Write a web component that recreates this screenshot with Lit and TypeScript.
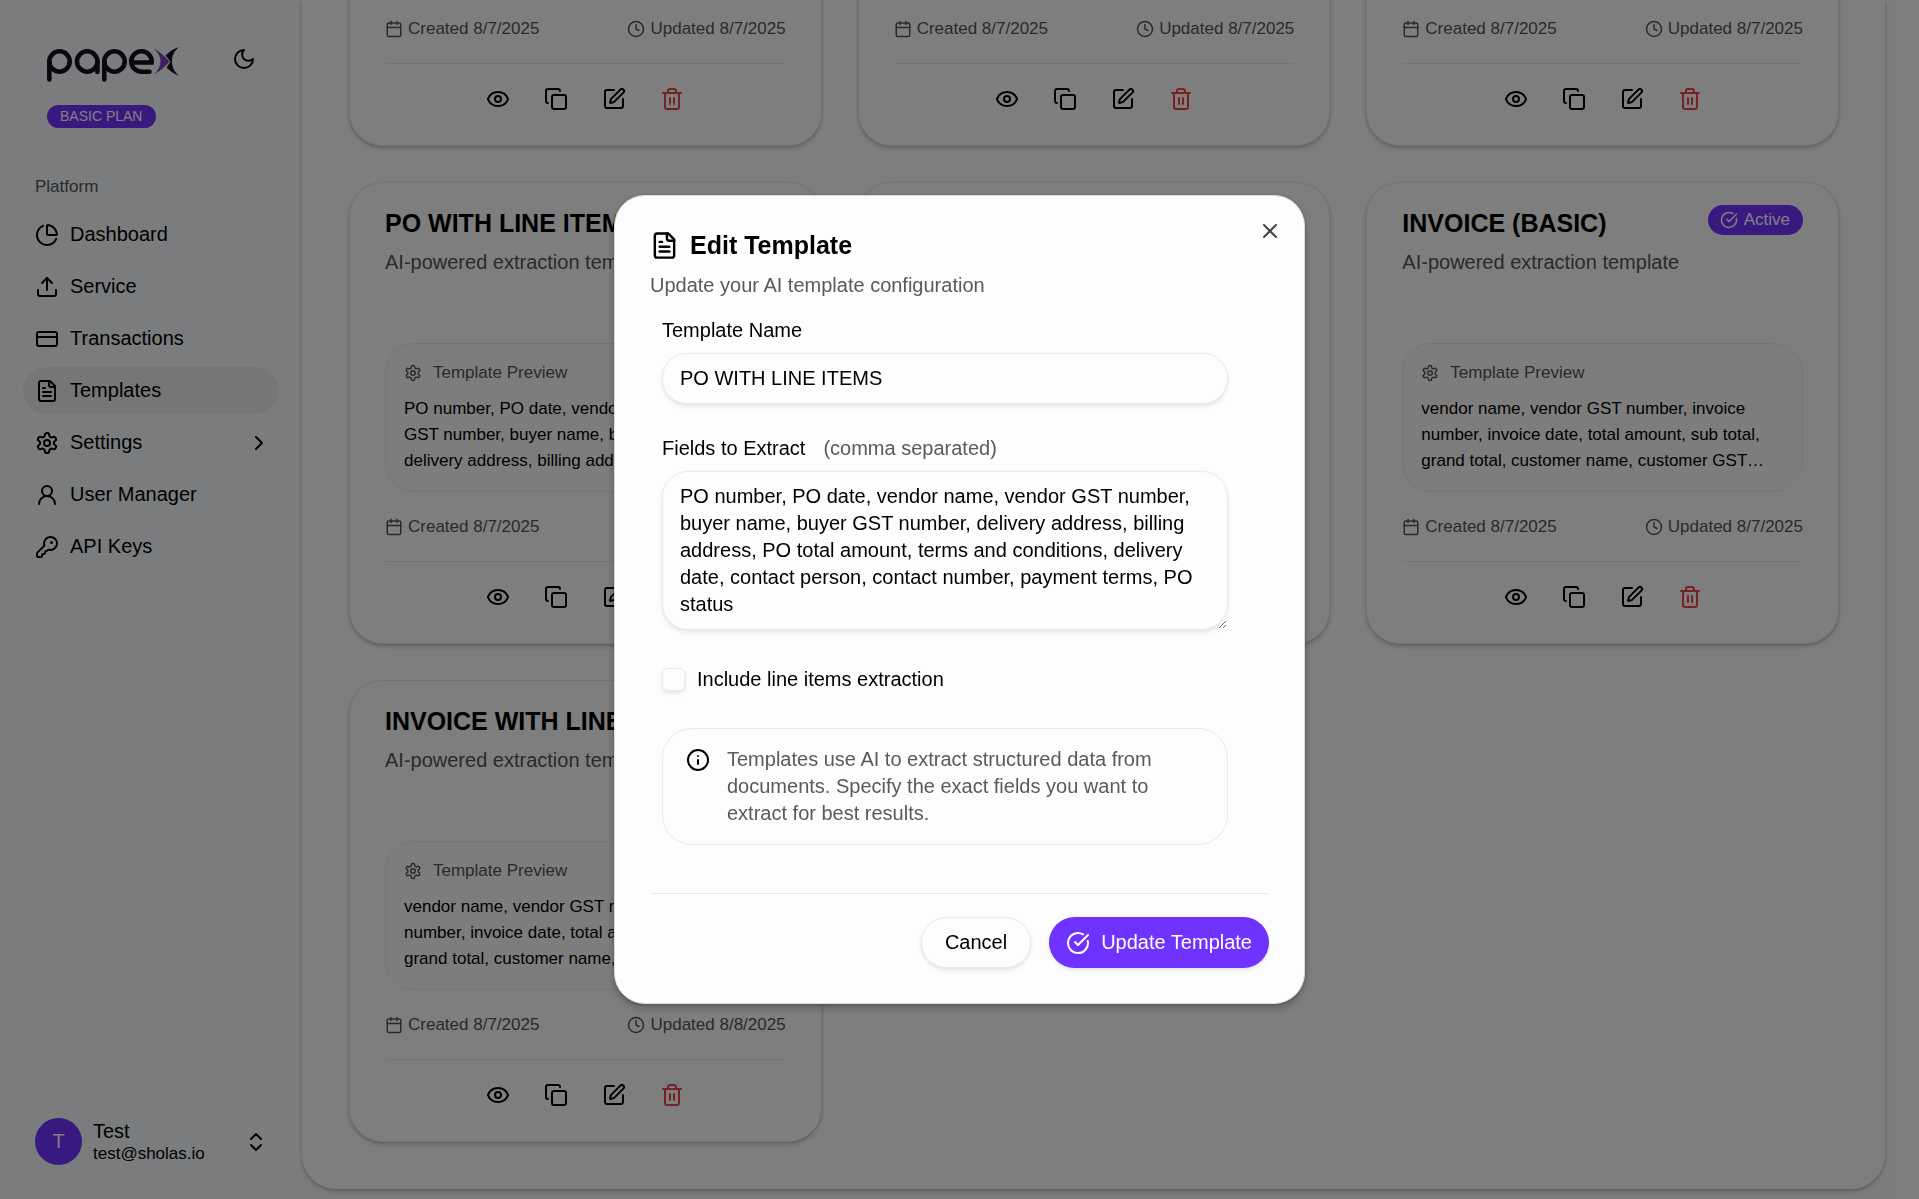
import { LitElement, html, svg, css, nothing } from "lit";
import { customElement, property } from "lit/decorators.js";

const icons: Record<string, unknown> = {
  pie: svg`<path d="M21 12c.552 0 1.005-.449.95-.998a10 10 0 0 0-8.953-8.951c-.55-.055-.998.398-.998.95v8a1 1 0 0 0 1 1z"/><path d="M21.21 15.89A10 10 0 1 1 8 2.83"/>`,
  upload: svg`<path d="M12 3v12"/><path d="m17 8-5-5-5 5"/><path d="M21 15v4a2 2 0 0 1-2 2H5a2 2 0 0 1-2-2v-4"/>`,
  card: svg`<rect width="20" height="14" x="2" y="5" rx="2"/><path d="M2 10h20"/>`,
  file: svg`<path d="M15 2H6a2 2 0 0 0-2 2v16a2 2 0 0 0 2 2h12a2 2 0 0 0 2-2V7Z"/><path d="M14 2v4a2 2 0 0 0 2 2h4"/><path d="M10 9H8"/><path d="M16 13H8"/><path d="M16 17H8"/>`,
  gear: svg`<path d="M12.22 2h-.44a2 2 0 0 0-2 2v.18a2 2 0 0 1-1 1.73l-.43.25a2 2 0 0 1-2 0l-.15-.08a2 2 0 0 0-2.73.73l-.22.38a2 2 0 0 0 .73 2.73l.15.1a2 2 0 0 1 1 1.72v.51a2 2 0 0 1-1 1.74l-.15.09a2 2 0 0 0-.73 2.73l.22.38a2 2 0 0 0 2.73.73l.15-.08a2 2 0 0 1 2 0l.43.25a2 2 0 0 1 1 1.73V20a2 2 0 0 0 2 2h.44a2 2 0 0 0 2-2v-.18a2 2 0 0 1 1-1.73l.43-.25a2 2 0 0 1 2 0l.15.08a2 2 0 0 0 2.73-.73l.22-.39a2 2 0 0 0-.73-2.73l-.15-.08a2 2 0 0 1-1-1.74v-.5a2 2 0 0 1 1-1.74l.15-.09a2 2 0 0 0 .73-2.73l-.22-.38a2 2 0 0 0-2.73-.73l-.15.08a2 2 0 0 1-2 0l-.43-.25a2 2 0 0 1-1-1.73V4a2 2 0 0 0-2-2z"/><circle cx="12" cy="12" r="3"/>`,
  user: svg`<circle cx="12" cy="8" r="5"/><path d="M20 21a8 8 0 0 0-16 0"/>`,
  key: svg`<path d="M2.586 17.414A2 2 0 0 0 2 18.828V21a1 1 0 0 0 1 1h3a1 1 0 0 0 1-1v-1a1 1 0 0 1 1-1h1a1 1 0 0 0 1-1v-1a1 1 0 0 1 1-1h.172a2 2 0 0 0 1.414-.586l.814-.814a6.5 6.5 0 1 0-4-4z"/><circle cx="16.5" cy="7.5" r=".5" fill="currentColor"/>`,
  chevron: svg`<path d="m9 18 6-6-6-6"/>`,
  updown: svg`<path d="m7 15 5 5 5-5"/><path d="m7 9 5-5 5 5"/>`,
  moon: svg`<path d="M12 3a6 6 0 0 0 9 9 9 9 0 1 1-9-9Z"/>`,
  calendar: svg`<path d="M8 2v4"/><path d="M16 2v4"/><rect width="18" height="18" x="3" y="4" rx="2"/><path d="M3 10h18"/>`,
  clock: svg`<circle cx="12" cy="12" r="10"/><path d="M12 6v6l4 2"/>`,
  eye: svg`<path d="M2.062 12.348a1 1 0 0 1 0-.696 10.75 10.75 0 0 1 19.876 0 1 1 0 0 1 0 .696 10.75 10.75 0 0 1-19.876 0"/><circle cx="12" cy="12" r="3"/>`,
  copy: svg`<rect width="14" height="14" x="8" y="8" rx="2"/><path d="M4 16c-1.1 0-2-.9-2-2V4c0-1.100.9-2 2-2h10c1.100 0 2 .9 2 2"/>`,
  edit: svg`<path d="M12 3H5a2 2 0 0 0-2 2v14a2 2 0 0 0 2 2h14a2 2 0 0 0 2-2v-7"/><path d="M18.375 2.625a1 1 0 0 1 3 3l-9.013 9.014a2 2 0 0 1-.853.505l-2.873.84a.5.5 0 0 1-.62-.62l.84-2.873a2 2 0 0 1 .506-.852z"/>`,
  trash: svg`<path d="M3 6h18"/><path d="M19 6v14a2 2 0 0 1-2 2H7a2 2 0 0 1-2-2V6"/><path d="M8 6V4a2 2 0 0 1 2-2h4a2 2 0 0 1 2 2v2"/><path d="M10 11v6"/><path d="M14 11v6"/>`,
  check: svg`<path d="M21.801 10A10 10 0 1 1 17 3.335"/><path d="m9 11 3 3L22 4"/>`,
  info: svg`<circle cx="12" cy="12" r="10"/><path d="M12 16v-4"/><path d="M12 8h.01"/>`,
  close: svg`<path d="M18 6 6 18"/><path d="m6 6 12 12"/>`,
};

const icon = (name: string, size = 24, stroke = 2) => html`<svg
  width=${size} height=${size} viewBox="0 0 24 24" fill="none" stroke="currentColor"
  stroke-width=${stroke} stroke-linecap="round" stroke-linejoin="round" aria-hidden="true"
>${icons[name]}</svg>`;

const base = css`
  * { box-sizing: border-box; }
  svg { display: block; flex: none; }
  h2, h3, p { margin: 0; }
  button, input, textarea { font: inherit; color: inherit; }
  button { background: none; border: 0; padding: 0; cursor: pointer; }
`;

interface Template {
  title?: string;
  fields?: string;
  created?: string;
  updated?: string;
}

const PO_FIELDS =
  "PO number, PO date, vendor name, vendor GST number, buyer name, buyer GST number, delivery address, billing address, PO total amount, terms and conditions, delivery date, contact person, contact number, payment terms, PO status";
const INVOICE_FIELDS =
  "vendor name, vendor GST number, invoice number, invoice date, total amount, sub total, grand total, customer name, customer GST number";

const TEMPLATES: Template[] = [
  { created: "8/7/2025", updated: "8/7/2025" },
  { created: "8/7/2025", updated: "8/7/2025" },
  { created: "8/7/2025", updated: "8/7/2025" },
  { title: "PO WITH LINE ITEMS", fields: PO_FIELDS, created: "8/7/2025", updated: "8/7/2025" },
  {},
  { title: "INVOICE (BASIC)", fields: INVOICE_FIELDS, created: "8/7/2025", updated: "8/7/2025" },
  { title: "INVOICE WITH LINE ITEMS", fields: INVOICE_FIELDS, created: "8/7/2025", updated: "8/8/2025" },
];

@customElement("template-card")
class TemplateCard extends LitElement {
  @property({ attribute: false }) template: Template = {};

  static styles = [
    base,
    css`
      :host {
        display: flex;
        flex-direction: column;
        box-sizing: border-box;
        min-width: 0;
        min-height: 462px;
        padding: 22px 35px 23px;
        border: 1px solid #ebebeb;
        border-radius: 34px;
        background: #fdfdfd;
        box-shadow: 0 1px 3px rgba(0, 0, 0, 0.16), 0 3px 5px rgba(0, 0, 0, 0.14);
      }
      .header { display: flex; align-items: flex-start; justify-content: space-between; height: 138px; }
      .heading { min-width: 0; }
      .title { font-size: 25px; line-height: 37px; font-weight: 700; white-space: nowrap; }
      .desc { margin-top: 6px; line-height: 28px; color: #555; }
      .badge {
        display: flex; align-items: center; gap: 6px;
        height: 30px; padding: 0 13px 0 12px;
        border-radius: 15px; background: #7033ff; color: #fff; font-size: 17px;
      }
      .preview { padding: 17px 18px; border: 1px solid #ebebeb; border-radius: 29px; background: #fbfbfb; }
      .label { display: flex; align-items: center; gap: 11px; font-size: 17px; line-height: 24px; color: #555; }
      .fields {
        margin-top: 11px; font-size: 17px; line-height: 26px;
        display: -webkit-box; -webkit-box-orient: vertical; -webkit-line-clamp: 3; overflow: hidden;
      }
      .meta {
        display: flex; justify-content: space-between;
        margin-top: auto; padding-bottom: 22px;
        border-bottom: 1px solid #e9e9ee;
        font-size: 17px; line-height: 24px; color: #555;
      }
      .date { display: flex; align-items: center; gap: 5px; }
      .actions { display: flex; justify-content: center; gap: 12px; padding-top: 12px; }
      .action { display: grid; place-items: center; width: 46px; height: 46px; }
      .danger { color: #ef4444; }
    `,
  ];

  render() {
    const t = this.template;
    return html`
      ${t.title
        ? html`<div class="header">
              <div class="heading">
                <h3 class="title">${t.title}</h3>
                <p class="desc">AI-powered extraction template</p>
              </div>
              <span class="badge">${icon("check", 18)}Active</span>
            </div>
            <div class="preview">
              <div class="label">${icon("gear", 18)}Template Preview</div>
              <p class="fields">${t.fields}</p>
            </div>`
        : nothing}
      ${t.created
        ? html`<div class="meta">
              <span class="date">${icon("calendar", 18)}<span>Created ${t.created}</span></span>
              <span class="date">${icon("clock", 18)}<span>Updated ${t.updated}</span></span>
            </div>
            <div class="actions">
              <button class="action" aria-label="View">${icon("eye")}</button>
              <button class="action" aria-label="Duplicate">${icon("copy")}</button>
              <button class="action" aria-label="Edit">${icon("edit")}</button>
              <button class="action danger" aria-label="Delete">${icon("trash")}</button>
            </div>`
        : nothing}
    `;
  }
}

@customElement("app-sidebar")
class AppSidebar extends LitElement {
  static styles = [
    base,
    css`
      :host { display: flex; flex-direction: column; box-sizing: border-box; width: 302px; flex: none; padding-top: 46px; }
      .brand { display: flex; align-items: flex-start; justify-content: space-between; padding: 0 45px 0 47px; }
      .theme { display: grid; place-items: center; width: 26px; height: 26px; }
      .plan {
        align-self: flex-start; margin: 23px 0 0 47px; padding: 0 14px 0 13px;
        border-radius: 12px; background: #7033ff; color: #fff; font-size: 14px; line-height: 23px;
      }
      .group { margin-top: 47px; padding-left: 35px; font-size: 17px; line-height: 24px; color: #555; }
      .nav { display: flex; flex-direction: column; gap: 5px; margin-top: 12px; padding: 0 23px; }
      .item {
        display: flex; align-items: center; gap: 11px; height: 47px; padding: 0 8px 0 12px;
        border-radius: 24px; color: #000; text-decoration: none;
      }
      .active { background: #ededed; }
      .text { flex: 1; }
      .account { display: flex; align-items: center; gap: 11px; margin-top: auto; padding: 0 34px 34px 35px; text-align: left; }
      .avatar { display: grid; place-items: center; width: 47px; height: 47px; border-radius: 50%; background: #7033ff; color: #fff; }
      .who { flex: 1; display: flex; flex-direction: column; line-height: 24px; }
      .mail { font-size: 17px; line-height: 22px; }
    `,
  ];

  render() {
    const items = [
      ["pie", "Dashboard"],
      ["upload", "Service"],
      ["card", "Transactions"],
      ["file", "Templates"],
      ["gear", "Settings"],
      ["user", "User Manager"],
      ["key", "API Keys"],
    ];
    return html`
      <div class="brand">
        <svg width="134" height="36" viewBox="47 46 134 36" role="img" aria-label="papex">
          <g fill="none" stroke="#15101f" stroke-width="4.600" stroke-linecap="round">
            <circle cx="59.500" cy="61.500" r="10.200" />
            <path d="M49.300 61.500V79.500" />
            <circle cx="87.200" cy="61.500" r="10.200" />
            <path d="M97.400 61.500V72" />
            <circle cx="114.500" cy="61.500" r="10.200" />
            <path d="M104.300 61.500V79.500" />
            <path d="M132 62.500H151.600A10.200 10.200 0 1 0 142 71.700H149.500" />
          </g>
          <path d="M154 48.500C159 51 165 56.500 169.500 61.500C165 66.500 159.500 71.500 154.500 74C158 70.500 160.500 66 160.500 61.500C160.500 57 158 52 154 48.500Z" fill="#7a3fc4" />
          <path d="M179 47C173.500 51.500 172 56.500 172 61.500C172 66.500 174 71.500 179 76C173.500 73.500 169.500 70.500 166.500 67.500L170.500 61.500L165.500 55.500C169.500 51.500 174 48.500 179 47Z" fill="#15101f" />
        </svg>
        <button class="theme" aria-label="Toggle theme">${icon("moon")}</button>
      </div>
      <span class="plan">BASIC PLAN</span>
      <div class="group">Platform</div>
      <nav class="nav">
        ${items.map(
          ([glyph, label]) => html`<a class="item ${label === "Templates" ? "active" : ""}" href="#">
            ${icon(glyph)}<span class="text">${label}</span>
            ${label === "Settings" ? icon("chevron") : nothing}
          </a>`,
        )}
      </nav>
      <button class="account">
        <span class="avatar">T</span>
        <span class="who"><span>Test</span><span class="mail">test@sholas.io</span></span>
        ${icon("updown")}
      </button>
    `;
  }
}

@customElement("edit-dialog")
class EditDialog extends LitElement {
  static styles = [
    base,
    css`
      :host { position: fixed; inset: 0; display: grid; place-items: center; background: rgba(0, 0, 0, 0.5); }
      .dialog {
        position: relative; width: 691px; max-width: 94vw; padding: 35px;
        border: 1px solid #dcdce0; border-radius: 31px; background: #fdfdfd;
        box-shadow: 0 1px 3px rgba(0, 0, 0, 0.18), 0 4px 8px rgba(0, 0, 0, 0.24);
      }
      .title { display: flex; align-items: center; gap: 11px; font-size: 25px; line-height: 29px; font-weight: 700; }
      .desc { margin-top: 11px; line-height: 28px; color: #5a5a5a; }
      .close { position: absolute; top: 23px; right: 22px; color: #444; }
      .body { display: flex; flex-direction: column; gap: 30px; margin-top: 17px; padding: 0 41px 0 12px; }
      .field { display: flex; flex-direction: column; gap: 9px; line-height: 28px; }
      .hint { margin-left: 18px; color: #5a5a5a; }
      .input, .area {
        display: block; width: 100%; border: 1px solid #ebebeb; background: #fdfdfd; outline: none;
        box-shadow: 0 1px 3px rgba(0, 0, 0, 0.05), 0 3px 5px rgba(0, 0, 0, 0.06);
      }
      .input { height: 51px; padding: 0 17px; border-radius: 25px; }
      .area { height: 159px; padding: 11px 17px; border-radius: 26px; line-height: 27px; resize: vertical; overflow: hidden; }
      .check { display: flex; align-items: center; gap: 12px; padding: 5px 0; line-height: 28px; }
      .box {
        appearance: none; width: 23px; height: 23px; margin: 0; border: 1px solid #ebebeb; border-radius: 6px; background: #fdfdfd;
        box-shadow: 0 1px 3px rgba(0, 0, 0, 0.06), 0 3px 5px rgba(0, 0, 0, 0.06);
      }
      .info {
        display: flex; gap: 17px; padding: 17px 23px; border: 1px solid #e9e9ee; border-radius: 30px;
        line-height: 27px; color: #5a5a5a;
      }
      .info svg { color: #000; margin-top: 2px; }
      .footer { display: flex; justify-content: flex-end; gap: 18px; margin-top: 48px; padding-top: 23px; border-top: 1px solid #e9e9ee; }
      .btn { display: flex; align-items: center; height: 51px; border-radius: 26px; box-shadow: 0 1px 3px rgba(0, 0, 0, 0.07), 0 3px 5px rgba(0, 0, 0, 0.06); }
      .cancel { padding: 0 23px; border: 1px solid #e9e9ee; }
      .primary { gap: 11px; padding: 0 17px; background: #7033ff; color: #fff; }
    `,
  ];

  render() {
    return html`
      <section class="dialog" role="dialog" aria-modal="true" aria-labelledby="dialog-title">
        <h2 class="title" id="dialog-title">${icon("file", 29)}Edit Template</h2>
        <p class="desc">Update your AI template configuration</p>
        <button class="close" aria-label="Close">${icon("close")}</button>
        <div class="body">
          <div class="field">
            <label for="name">Template Name</label>
            <input class="input" id="name" type="text" .value=${"PO WITH LINE ITEMS"} />
          </div>
          <div class="field">
            <label for="fields">Fields to Extract<span class="hint">(comma separated)</span></label>
            <textarea class="area" id="fields" spellcheck="false" .value=${PO_FIELDS}></textarea>
          </div>
          <div class="check">
            <input class="box" id="lines" type="checkbox" />
            <label for="lines">Include line items extraction</label>
          </div>
          <div class="info">
            ${icon("info")}
            <p>Templates use AI to extract structured data from documents. Specify the exact fields you want to extract for best results.</p>
          </div>
        </div>
        <div class="footer">
          <button class="btn cancel">Cancel</button>
          <button class="btn primary">${icon("check")}Update Template</button>
        </div>
      </section>
    `;
  }
}

@customElement("app-root")
class AppRoot extends LitElement {
  static styles = [
    base,
    css`
      :host {
        display: block; box-sizing: border-box; height: 100vh; padding-right: 22px; overflow: hidden;
        background: #fdfdfd; color: #000;
        font-family: "Liberation Sans", Arial, sans-serif; font-size: 20px;
      }
      .shell { display: flex; height: 100%; padding-right: 12px; background: #f7f9fc; }
      .panel {
        flex: 1; min-width: 0; display: flex; flex-direction: column; justify-content: flex-end;
        margin-bottom: 10px; padding: 0 46px 47px 47px; overflow: hidden;
        border-radius: 0 0 34px 34px; background: #fdfdfd;
        box-shadow: 0 1px 3px rgba(0, 0, 0, 0.16), 0 3px 5px rgba(0, 0, 0, 0.14);
      }
      .grid { display: grid; grid-template-columns: repeat(3, minmax(0, 1fr)); gap: 36px; }
    `,
  ];

  render() {
    return html`
      <div class="shell">
        <app-sidebar></app-sidebar>
        <main class="panel">
          <div class="grid">
            ${TEMPLATES.map((t) => html`<template-card .template=${t}></template-card>`)}
          </div>
        </main>
      </div>
      <edit-dialog></edit-dialog>
    `;
  }
}
